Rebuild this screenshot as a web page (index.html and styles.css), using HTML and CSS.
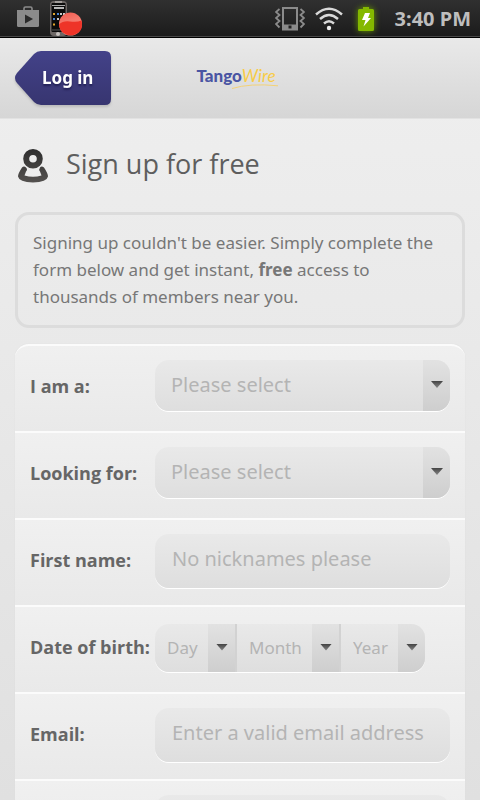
FILE: index.html
```html
<!DOCTYPE html>
<html lang="en">
<head>
<meta charset="utf-8">
<meta name="viewport" content="width=device-width, initial-scale=1">
<title>Sign up</title>
<link rel="stylesheet" href="styles.css">
</head>
<body>
<div class="status">
  <div class="status-left">
    <svg width="22" height="22" viewBox="0 0 22 22" aria-hidden="true">
      <path d="M7 5V2.500Q7 1 8.500 1h5Q15 1 15 2.500V5" fill="none" stroke="#8b8b8b" stroke-width="1.600"/>
      <path d="M0 4h22v15.500q0 1.500-1.500 1.500h-19Q0 21 0 19.500z" fill="#8b8b8b"/>
      <path d="M8 8.500v9l8-4.500z" fill="#2a2a2a"/>
    </svg>
    <svg width="34" height="36" viewBox="0 0 34 36" aria-hidden="true">
      <defs>
        <linearGradient id="ball" x1="0" y1="0" x2="0.300" y2="1"><stop offset="0" stop-color="#f25a4e"/><stop offset="0.450" stop-color="#f4776b"/><stop offset="1" stop-color="#f98a7c"/></linearGradient>
      </defs>
      <rect x="1" y="1" width="17" height="35" rx="4" fill="#6d6765"/>
      <rect x="2.500" y="3" width="14" height="29" rx="1" fill="#0b0b0b"/>
      <path d="M6 2h7" stroke="#d8d4d0" stroke-width="1"/>
      <path d="M3 5.500h13" stroke="#aaa" stroke-width="1"/>
      <path d="M5 8h10" stroke="#f2f2f2" stroke-width="1.500"/>
      <path d="M4 14h2M4 24.500h2" stroke="#e0a62d" stroke-width="2"/>
      <path d="M8 14h2M4 19h2" stroke="#4c88d8" stroke-width="2"/>
      <path d="M11 14h2M8 19h2M14 14h2" stroke="#c9c9c9" stroke-width="2"/>
      <path d="M3 30h10" stroke="#555" stroke-width="1"/>
      <circle cx="9" cy="34" r="2" fill="#c5c0bd"/>
      <circle cx="21.500" cy="24" r="11.500" fill="url(#ball)"/>
      <path d="M10 24.500Q14 20.500 21 21.500T32.500 20.500Q34.500 30 28 33.500Q21 37.500 14 32.800Q10.500 30 10 24.500z" fill="#ee3428"/>
    </svg>
  </div>
  <div class="status-right">
    <svg width="30" height="24" viewBox="0 0 30 24" aria-hidden="true">
      <g fill="none" stroke="#8b8b8b">
        <path d="M8 1h14v21.500H8z" stroke-width="2"/>
        <path d="M4.500 2L1 5l3.500 3L1 11l3.500 3L1 17l3.500 3.500M25.500 2L29 5l-3.500 3 3.500 3-3.500 3 3.500 3-3.500 3.500" stroke-width="1.800"/>
      </g>
      <path d="M8 17.500h14V23H8z" fill="#8b8b8b"/>
      <path d="M13.500 18.500h3v3h-3z" fill="#222"/>
    </svg>
    <svg width="28" height="24" viewBox="0 0 28 24" aria-hidden="true">
      <g fill="none" stroke="#d9d9d9" stroke-width="2.400">
        <path d="M1 7.500Q14-4 27 7.500"/>
        <path d="M5 12q9-8 18 0"/>
        <path d="M9 16.500q5-4.500 10 0"/>
      </g>
      <circle cx="14" cy="21" r="2.200" fill="#eee"/>
    </svg>
    <svg class="battery" width="16" height="24" viewBox="0 0 16 24" aria-hidden="true">
      <path d="M5 0h6v2h3.500Q16 2 16 3.500v19Q16 24 14.500 24h-13Q0 24 0 22.500v-19Q0 2 1.500 2H5z" fill="#84b800"/>
      <path d="M7 6h5l-2 5h3L5.500 19.500 7.500 13H4z" fill="#fff"/>
    </svg>
    <span class="clock">3:40 PM</span>
  </div>
</div>

<header class="bar">
  <a class="login" href="#login">
    <svg class="login-shape" viewBox="0 0 96 54" preserveAspectRatio="none" aria-hidden="true">
      <defs><linearGradient id="indigo" x1="0" y1="0" x2="0" y2="1"><stop offset="0" stop-color="#434289"/><stop offset="1" stop-color="#373570"/></linearGradient></defs>
      <path d="M26 0h64q6 0 6 6v42q0 6-6 6H26q-4 0-7-3L2 32q-4-5 0-10L19 3q3-3 7-3z" fill="url(#indigo)"/>
    </svg>
    <span class="login-text">Log in</span>
  </a>
  <div class="logo">
    <span class="logo-a">Tango</span><span class="logo-b">Wire</span>
    <svg class="swoosh" width="46" height="5" viewBox="0 0 46 5" aria-hidden="true"><path d="M0 4.500Q18-1 46 1.800" fill="none" stroke="#f3d277" stroke-width="1"/></svg>
  </div>
</header>

<main class="page">
  <h1 class="title">
    <svg width="30" height="34" viewBox="0 0 30 34" aria-hidden="true">
      <defs><linearGradient id="ink" x1="0" y1="0" x2="0" y2="1"><stop offset="0" stop-color="#2e2e2e"/><stop offset="1" stop-color="#54514f"/></linearGradient></defs>
      <path fill="url(#ink)" fill-rule="evenodd" d="M15 0a9.800 9.800 0 1 1 0 19.600A9.800 9.800 0 0 1 15 0zm0 6a3.800 3.800 0 1 0 0 7.600A3.800 3.800 0 0 0 15 6zM4 18.500q2-2 4 0t0 4L6.500 26.500Q15 29 23.500 26.500L22 22.500q-1.500-2 0-4t4 0q4 6 4 9Q29 33 15 33.500 1 33 0 27.500q0-3 4-9z"/>
    </svg>
    <span class="title-text">Sign up for free</span>
  </h1>

  <p class="intro">Signing up couldn't be easier. Simply complete the form below and get instant, <b>free</b> access to thousands of members near you.</p>

  <form class="form">
    <div class="row">
      <label for="iam">I am a:</label>
      <div class="pick"><select id="iam"><option>Please select</option><option>Man</option><option>Woman</option></select></div>
    </div>
    <div class="row">
      <label for="looking">Looking for:</label>
      <div class="pick"><select id="looking"><option>Please select</option><option>Men</option><option>Women</option></select></div>
    </div>
    <div class="row">
      <label for="first">First name:</label>
      <input class="text" id="first" type="text" placeholder="No nicknames please">
    </div>
    <div class="row">
      <label for="day">Date of birth:</label>
      <div class="date">
        <div class="part day"><select id="day"><option>Day</option></select></div>
        <div class="part month"><select aria-label="Month"><option>Month</option></select></div>
        <div class="part year"><select aria-label="Year"><option>Year</option></select></div>
      </div>
    </div>
    <div class="row">
      <label for="email">Email:</label>
      <input class="text" id="email" type="email" placeholder="Enter a valid email address">
    </div>
    <div class="row">
      <input class="text last" type="password" aria-label="Password">
    </div>
  </form>
</main>
</body>
</html>
```
FILE: styles.css
```css
* { box-sizing: border-box; }

body {
  margin: 0;
  height: 100vh;
  overflow: hidden;
  background: linear-gradient(#f0f0f0, #e0e0e0);
  color: #777;
  font-family: "Droid Sans", "Noto Sans", "Open Sans", sans-serif;
}

.status {
  display: flex;
  justify-content: space-between;
  height: 38px;
  padding: 0 9px 0 17px;
  background: linear-gradient(#303030, #1b1b1b);
  border-bottom: 1px solid #000;
  box-shadow: inset 0 -1px #484848;
}
.status-left { display: flex; gap: 10px; }
.status-left svg:first-child { margin-top: 6px; }
.status-right { display: flex; align-items: center; gap: 10px; }
.battery { margin-left: 5px; filter: drop-shadow(0 0 3px #6a9a00); }
.clock {
  margin-left: 11px;
  color: #bebebe;
  font-size: 20px;
  font-weight: 700;
}

.bar {
  display: grid;
  grid-template-columns: 1fr auto 1fr;
  align-items: center;
  height: 81px;
  padding: 0 15px;
  background: linear-gradient(#e9e9e9, #d6d6d6);
  border-bottom: 1px solid #e2e2e2;
}
.login {
  display: grid;
  width: 96px;
  height: 54px;
  color: #fff;
  text-decoration: none;
  filter: drop-shadow(0 2px 1px #bbb);
}
.login-shape, .login-text { grid-area: 1 / 1; }
.login-shape { width: 100%; height: 100%; }
.login-text {
  align-self: center;
  padding-left: 27px;
  font-size: 17px;
  font-weight: 700;
  line-height: 24px;
  text-shadow: 0 2px 2px #222055;
}
.logo {
  position: relative;
  display: flex;
  padding: 0 8px 5px 0;
  font: 17px/20px Lato, sans-serif;
  white-space: nowrap;
}
.logo-a { color: #4a55a3; font-weight: 900; }
.logo-b { color: #f8cc46; font-style: italic; }
.swoosh { position: absolute; right: 6px; bottom: 2px; }

.page { padding: 0 15px; }

.title {
  display: flex;
  align-items: center;
  gap: 18px;
  margin: 0;
  padding: 0 3px;
  height: 93px;
  color: #5e5e5e;
  font-family: "Droid Sans", "Open Sans", "Noto Sans", sans-serif;
  font-size: 27px;
  font-weight: 400;
}
.title-text { padding-bottom: 4px; }

.intro {
  margin: 0 0 16px;
  padding: 14px 15px 15px;
  border: 3px solid #dcdcdc;
  border-radius: 14px;
  font-size: 17px;
  line-height: 27px;
}

.form {
  background: #ececec;
  border-radius: 14px 14px 0 0;
  box-shadow: 0 0 1px #d4d4d4;
}
.row {
  display: grid;
  grid-template-columns: 125px 1fr;
  align-items: center;
  height: 87px;
  padding: 0 15px 4px;
  background: linear-gradient(#f0f0f0, #e9e9e9);
  border-top: 2px solid #fbfbfb;
}
.row:first-child { border-radius: 14px 14px 0 0; }
label {
  padding-bottom: 2px;
  color: #666;
  font-family: "Droid Sans", "Open Sans", "Noto Sans", sans-serif;
  font-size: 18px;
  font-weight: 700;
  white-space: nowrap;
}

.pick, .date, .text {
  overflow: hidden;
  border: 0;
  border-radius: 14px;
  background: linear-gradient(#e9e9e9, #dedede);
  box-shadow: 0 1px #fff;
}
.pick { height: 51px; margin-bottom: 2px; }
.pick, .part { position: relative; }
.pick::before, .part::before {
  content: "";
  position: absolute;
  inset: 0 0 0 auto;
  width: 27px;
  background: linear-gradient(#e2e2e2, #cecece);
  pointer-events: none;
}
.pick::after, .part::after {
  content: "";
  position: absolute;
  top: 21px;
  right: 7px;
  width: 12px;
  height: 7px;
  background: linear-gradient(#444, #888);
  clip-path: polygon(0 0, 100% 0, 50% 100%);
  pointer-events: none;
}
select {
  appearance: none;
  width: 100%;
  height: 100%;
  margin: 0;
  border: 0;
  background: transparent;
  color: #b4b4b4;
  font-family: inherit;
}
.pick select { padding: 0 27px 3px 16px; font-size: 20px; }

.text {
  width: 100%;
  height: 54px;
  padding: 0 17px 4px;
  color: #777;
  font-family: inherit;
  font-size: 20px;
}
.text::placeholder { color: #b4b4b4; opacity: 1; }
.last { grid-column: 2; }

.date {
  display: flex;
  justify-self: start;
  height: 48px;
}
.part { border-right: 2px solid #d2d2d2; }
.part:last-child { border-right: 0; }
.part select { padding: 0 27px 1px 12px; font-size: 17px; }
.part::after { top: 20px; }
.day { width: 82px; }
.month { width: 104px; }
.year { width: 84px; }
```
